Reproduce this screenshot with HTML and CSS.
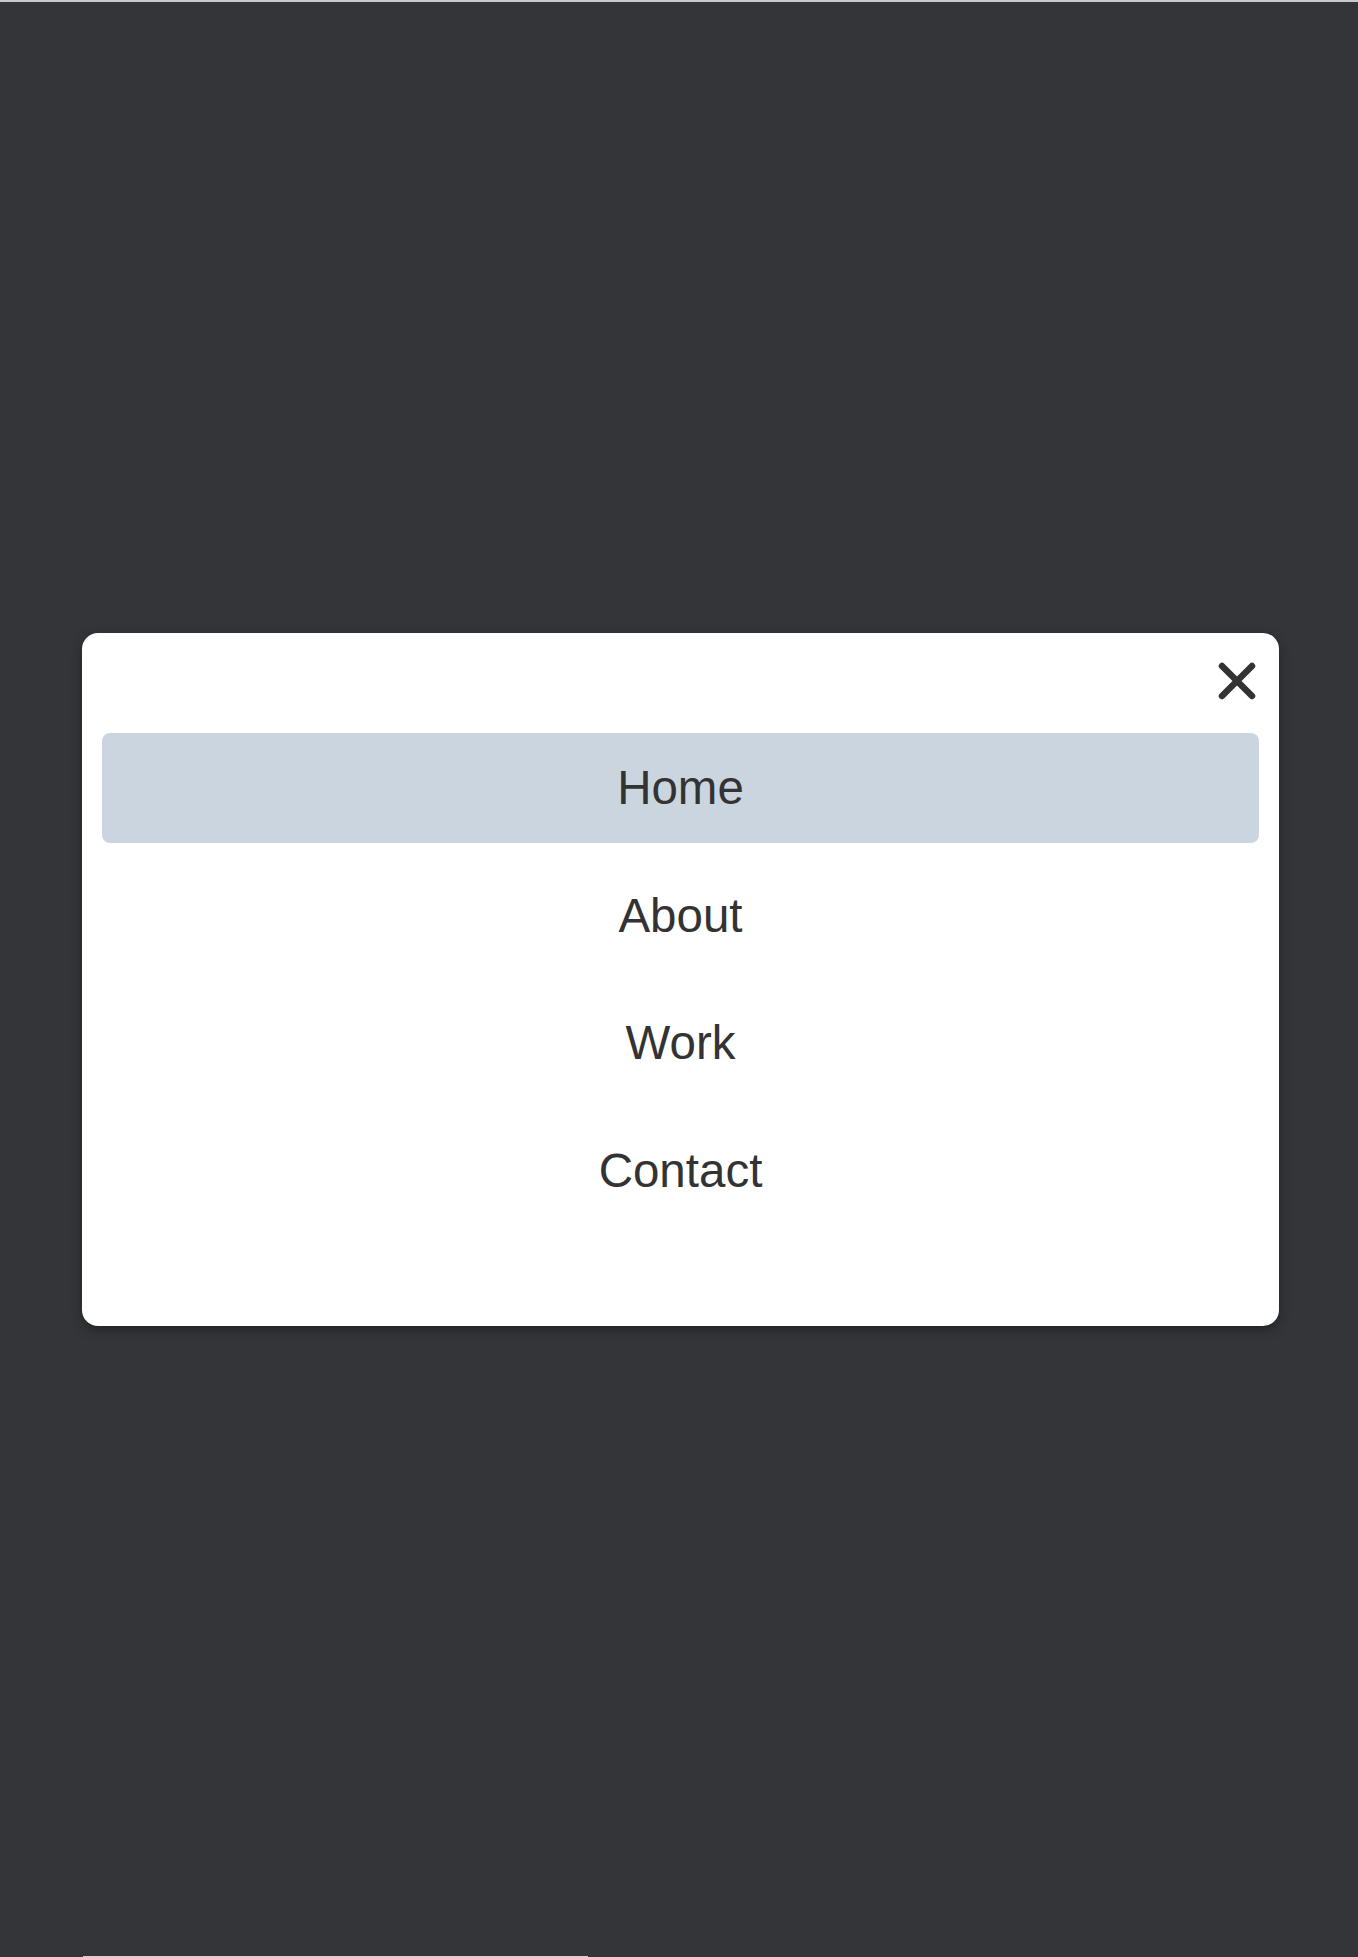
FILE: index.html
```html
<!DOCTYPE html>
<html lang="en">
<head>
<meta charset="utf-8">
<title>Menu</title>
<link rel="stylesheet" href="styles.css">
</head>
<body>
<div class="topline"></div>
<div class="overlay">
  <nav class="modal">
    <div class="modal-head">
      <button class="close" aria-label="Close menu">
        <svg width="44" height="44" viewBox="0 0 44 44" aria-hidden="true">
          <path d="M7 7 L37 37 M37 7 L7 37" stroke="#333333" stroke-width="6.5" stroke-linecap="round" fill="none"/>
        </svg>
      </button>
    </div>
    <ul class="menu">
      <li><a class="item active" href="#">Home</a></li>
      <li><a class="item" href="#">About</a></li>
      <li><a class="item" href="#">Work</a></li>
      <li><a class="item" href="#">Contact</a></li>
    </ul>
  </nav>
</div>
<div class="bottomrow"><div class="peek"></div></div>
</body>
</html>
```
FILE: styles.css
```css
html, body {
  margin: 0;
  padding: 0;
  background: #333539;
  font-family: "Liberation Sans", Arial, sans-serif;
  overflow: hidden;
}

.topline {
  height: 2px;
  background: #c9cacc;
}

.overlay {
  height: 1954px;
  box-sizing: border-box;
  padding-top: 631px;
  padding-left: 82px;
  background: #333539;
}

.modal {
  width: 1197px;
  box-sizing: border-box;
  background: #ffffff;
  border-radius: 16px;
  padding: 26px 20px 100px 20px;
  box-shadow: 0 4px 12px rgba(0, 0, 0, 0.35);
}

.modal-head {
  display: flex;
  justify-content: flex-end;
  margin-bottom: 30px;
}

.close {
  width: 44px;
  height: 44px;
  padding: 0;
  border: 0;
  background: transparent;
  display: flex;
  align-items: center;
  justify-content: center;
  cursor: pointer;
}

.menu {
  list-style: none;
  margin: 0;
  padding: 0;
  display: flex;
  flex-direction: column;
  gap: 17.5px;
}

.item {
  display: flex;
  align-items: center;
  justify-content: center;
  height: 110px;
  box-sizing: border-box;
  border-radius: 8px;
  color: #333333;
  text-decoration: none;
  font-size: 47.5px;
  line-height: 1;
}

.item.active {
  background: #cbd5e0;
}

.bottomrow {
  height: 1px;
  background: #333539;
  padding-left: 83px;
}

.peek {
  width: 505px;
  height: 1px;
  background: #cfd0d2;
}
```
